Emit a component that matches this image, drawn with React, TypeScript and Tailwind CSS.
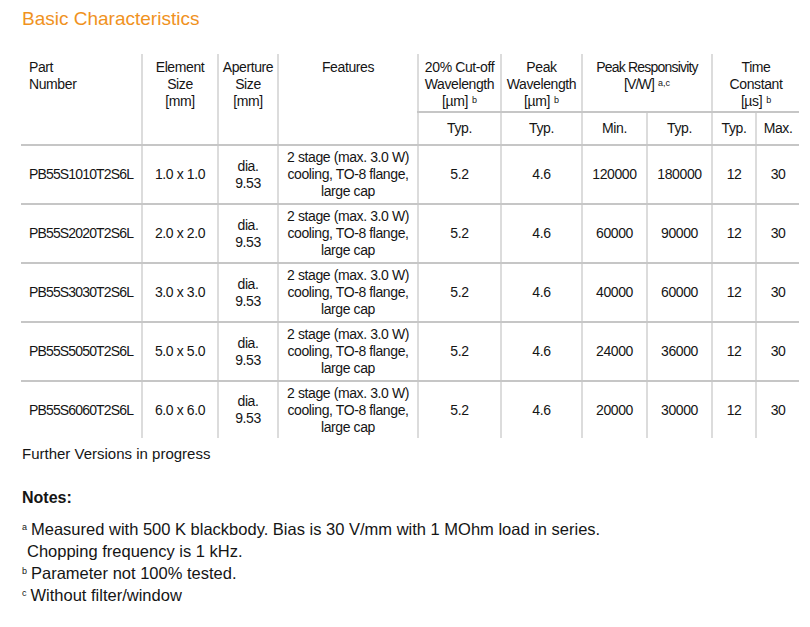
import React from "react";

const rows = [
  ["PB55S1010T2S6L", "1.0 x 1.0", "120000", "180000"],
  ["PB55S2020T2S6L", "2.0 x 2.0", "60000", "90000"],
  ["PB55S3030T2S6L", "3.0 x 3.0", "40000", "60000"],
  ["PB55S5050T2S6L", "5.0 x 5.0", "24000", "36000"],
  ["PB55S6060T2S6L", "6.0 x 6.0", "20000", "30000"],
];

const V = "border-l-2 border-l-[#dcdcdc]";
const H = "border-b-2 border-b-[#c6c6c6]";

function Sup({ children }: { children: React.ReactNode }) {
  return <sup className="text-[9px] relative -top-[3px] ml-[4px] tracking-normal">{children}</sup>;
}

function NoteMark({ children }: { children: React.ReactNode }) {
  return <span className="inline-block text-[9px] leading-[0] relative -top-[5px] mr-[4px]">{children}</span>;
}

export default function App() {
  return (
    <div
      className="w-[810px] h-[627px] bg-white text-[#151515] overflow-hidden"
      style={{ fontFamily: '"Liberation Sans", Arial, sans-serif' }}
    >
      <div className="pt-[7px] pl-[22px] text-[19px] leading-[24px] text-[#f0921e]">Basic Characteristics</div>
      <table className="mt-[23px] ml-[21px] w-[778px] table-fixed border-collapse text-[14px] leading-[17px] tracking-[-0.4px]">
        <colgroup>
          <col className="w-[121px]" />
          <col className="w-[76px]" />
          <col className="w-[60px]" />
          <col className="w-[140px]" />
          <col className="w-[83px]" />
          <col className="w-[81px]" />
          <col className="w-[65px]" />
          <col className="w-[65px]" />
          <col className="w-[44px]" />
          <col className="w-[43px]" />
        </colgroup>
        <thead>
          <tr className="h-[58px]">
            <th rowSpan={2} className={`${H} align-top text-left font-normal pl-[8px] pt-[5px]`}>
              Part<br />Number
            </th>
            <th rowSpan={2} className={`${H} ${V} align-top font-normal pt-[5px]`}>
              Element<br />Size<br />[mm]
            </th>
            <th rowSpan={2} className={`${H} ${V} align-top font-normal pt-[5px]`}>
              Aperture<br />Size<br />[mm]
            </th>
            <th rowSpan={2} className={`${H} ${V} align-top font-normal pt-[5px]`}>
              Features
            </th>
            <th className={`${H} ${V} align-top font-normal pt-[5px]`}>
              20% Cut-off<br />Wavelength<br />[µm]<Sup>b</Sup>
            </th>
            <th className={`${H} ${V} align-top font-normal pt-[5px]`}>
              Peak<br />Wavelength<br />[µm]<Sup>b</Sup>
            </th>
            <th colSpan={2} className={`${H} ${V} align-top font-normal pt-[5px] tracking-[-0.8px]`}>
              Peak Responsivity<br />[V/W]<Sup>a,c</Sup>
            </th>
            <th colSpan={2} className={`${H} ${V} align-top font-normal pt-[5px]`}>
              Time<br />Constant<br />[µs]<Sup>b</Sup>
            </th>
          </tr>
          <tr className="h-[33px]">
            <th className={`${H} ${V} font-normal`}>Typ.</th>
            <th className={`${H} ${V} font-normal`}>Typ.</th>
            <th className={`${H} ${V} font-normal`}>Min.</th>
            <th className={`${H} ${V} font-normal`}>Typ.</th>
            <th className={`${H} ${V} font-normal`}>Typ.</th>
            <th className={`${H} ${V} font-normal`}>Max.</th>
          </tr>
        </thead>
        <tbody>
          {rows.map((r, i) => {
            const last = i === rows.length - 1;
            const b = last ? "" : H;
            return (
              <tr key={r[0]} className={last ? "h-[57px]" : "h-[59px]"}>
                <td className={`${b} pl-[8px] text-left tracking-[-0.85px]`}>{r[0]}</td>
                <td className={`${b} ${V} text-center`}>{r[1]}</td>
                <td className={`${b} ${V} text-center`}>
                  dia.<br />9.53
                </td>
                <td className={`${b} ${V} text-center`}>
                  2 stage (max. 3.0 W)<br />cooling, TO-8 flange,<br />large cap
                </td>
                <td className={`${b} ${V} text-center`}>5.2</td>
                <td className={`${b} ${V} text-center`}>4.6</td>
                <td className={`${b} ${V} text-center`}>{r[2]}</td>
                <td className={`${b} ${V} text-center`}>{r[3]}</td>
                <td className={`${b} ${V} text-center`}>12</td>
                <td className={`${b} ${V} text-center`}>30</td>
              </tr>
            );
          })}
        </tbody>
      </table>
      <div className="pl-[22px] pt-[5px] text-[15px] leading-[22px]">Further Versions in progress</div>
      <div className="pl-[22px] pt-[22px] text-[16px] leading-[22px] font-bold">Notes:</div>
      <div className="pl-[22px] pt-[9px] text-[16.5px] leading-[22px]">
        <div>
          <NoteMark>a</NoteMark>
          Measured with 500 K blackbody. Bias is 30 V/mm with 1 MOhm load in series.
        </div>
        <div className="pl-[5px]">Chopping frequency is 1 kHz.</div>
        <div>
          <NoteMark>b</NoteMark>
          Parameter not 100% tested.
        </div>
        <div>
          <NoteMark>c</NoteMark>
          Without filter/window
        </div>
      </div>
    </div>
  );
}
